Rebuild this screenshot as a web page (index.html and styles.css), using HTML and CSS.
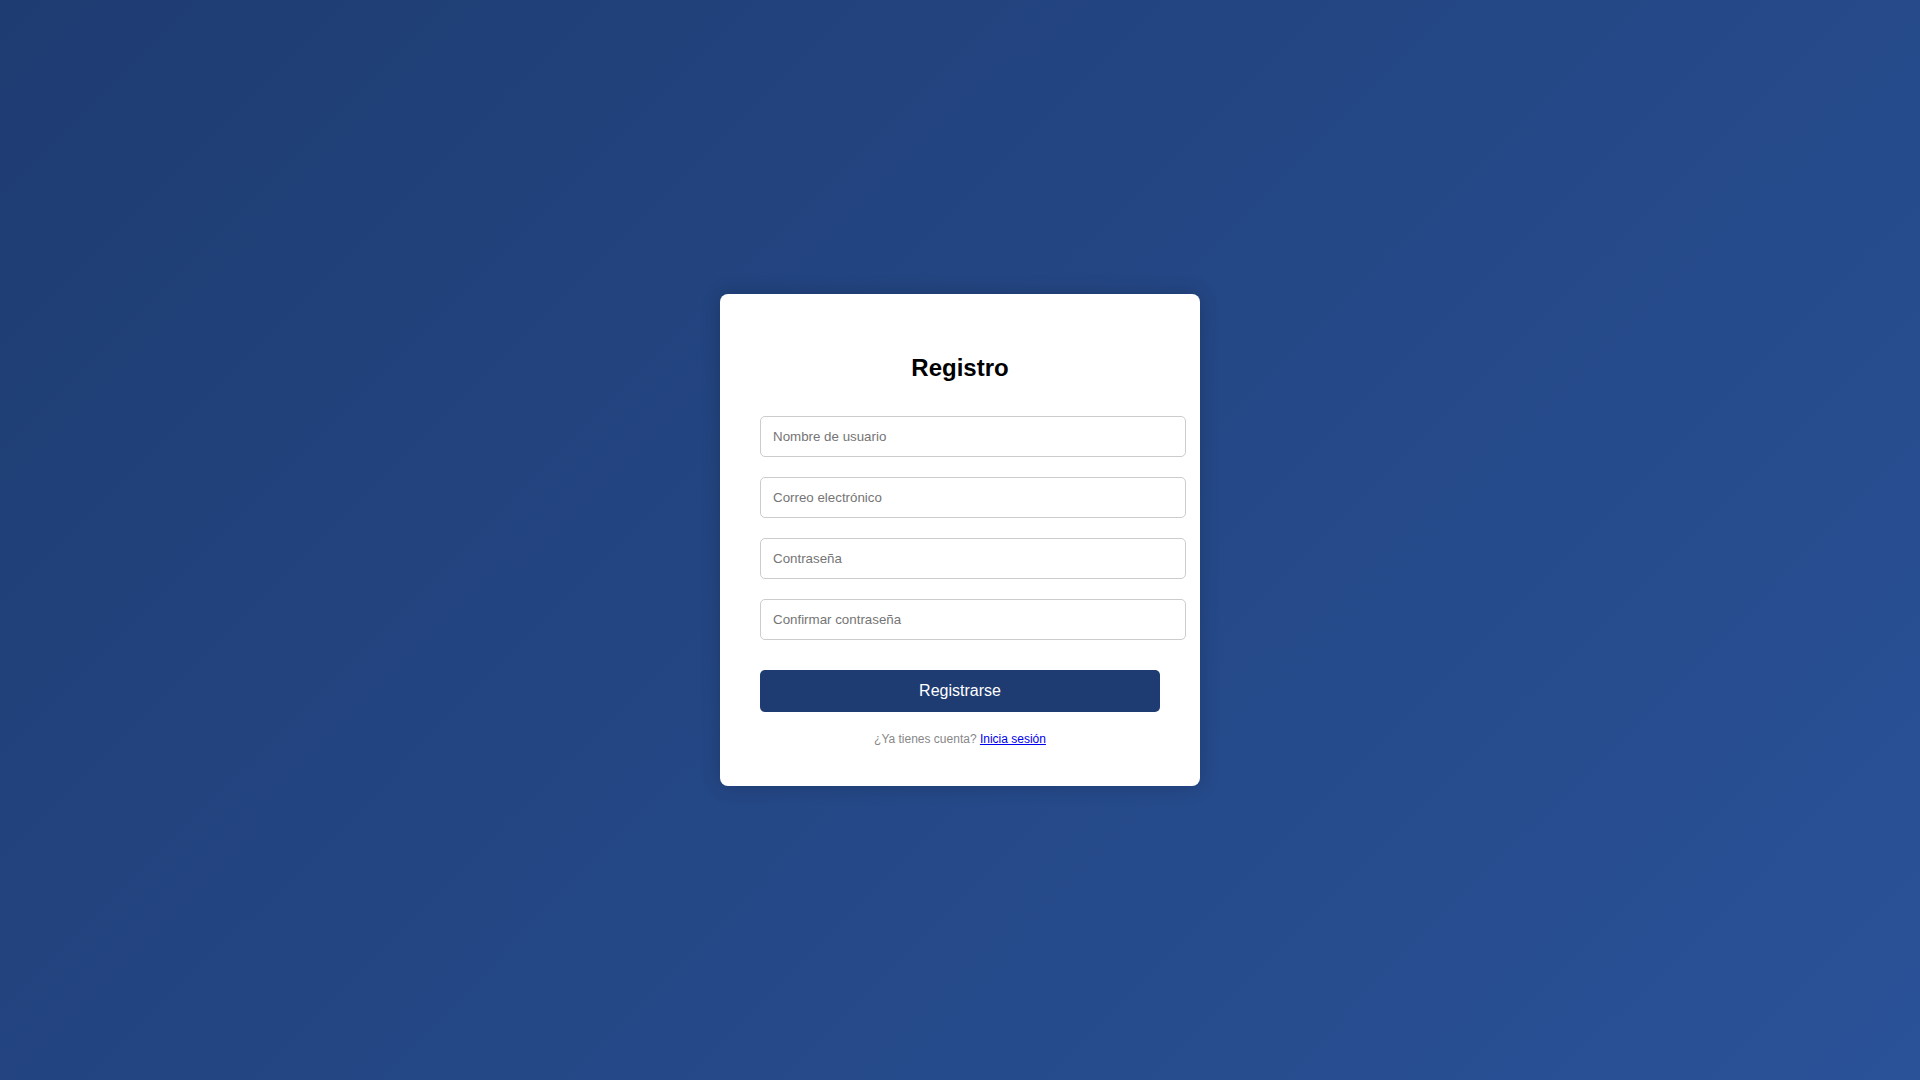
FILE: index.html
```html
<!DOCTYPE html>
<html lang="es">
<head>
<meta charset="utf-8">
<title>Registro</title>
<link rel="stylesheet" href="styles.css">
</head>
<body>
<div class="card">
  <h2 class="title">Registro</h2>
  <form class="form">
    <input class="field" type="text" placeholder="Nombre de usuario">
    <input class="field" type="email" placeholder="Correo electrónico">
    <input class="field" type="password" placeholder="Contraseña">
    <input class="field" type="password" placeholder="Confirmar contraseña">
    <button class="submit" type="button">Registrarse</button>
  </form>
  <p class="switch">¿Ya tienes cuenta? <a href="#" class="link">Inicia sesión</a></p>
</div>
</body>
</html>
```

FILE: styles.css
```css
html, body {
  margin: 0;
  padding: 0;
  height: 100%;
}
body {
  font-family: "Liberation Sans", Arial, sans-serif;
  background: linear-gradient(135deg, #1e3c72, #2a5298);
  display: flex;
  align-items: center;
  justify-content: center;
  min-height: 100vh;
}
.card {
  background: #fff;
  width: 400px;
  padding: 40px;
  border-radius: 8px;
  box-shadow: 0 0 20px rgba(0, 0, 0, 0.2);
  text-align: center;
}
.title {
  font-size: 24px;
  font-weight: bold;
  color: #000;
  margin: 20px 0 34px;
  line-height: 27.6px;
}
.form {
  display: flex;
  flex-direction: column;
  align-items: flex-start;
  margin: 0;
}
.field {
  display: block;
  width: 100%;
  box-sizing: content-box;
  padding: 12px;
  border: 1px solid #ccc;
  border-radius: 5px;
  font-family: "Liberation Sans", Arial, sans-serif;
  font-size: 13.333px;
  height: 15px;
  line-height: 15px;
  margin: 0 0 20px;
  background: #fff;
  color: #333;
  outline: none;
}
.field::placeholder {
  color: #757575;
}
.field:last-of-type {
  margin-bottom: 30px;
}
.submit {
  width: 100%;
  height: 42px;
  padding: 0 12px;
  border: none;
  border-radius: 5px;
  background: #1e3c72;
  color: #fff;
  font-family: "Liberation Sans", Arial, sans-serif;
  font-size: 16px;
  cursor: pointer;
}
.switch {
  margin: 20px 0 0;
  font-size: 12px;
  color: #888;
  line-height: 14px;
}
.link {
  color: #0000ee;
  text-decoration: underline;
}
```
